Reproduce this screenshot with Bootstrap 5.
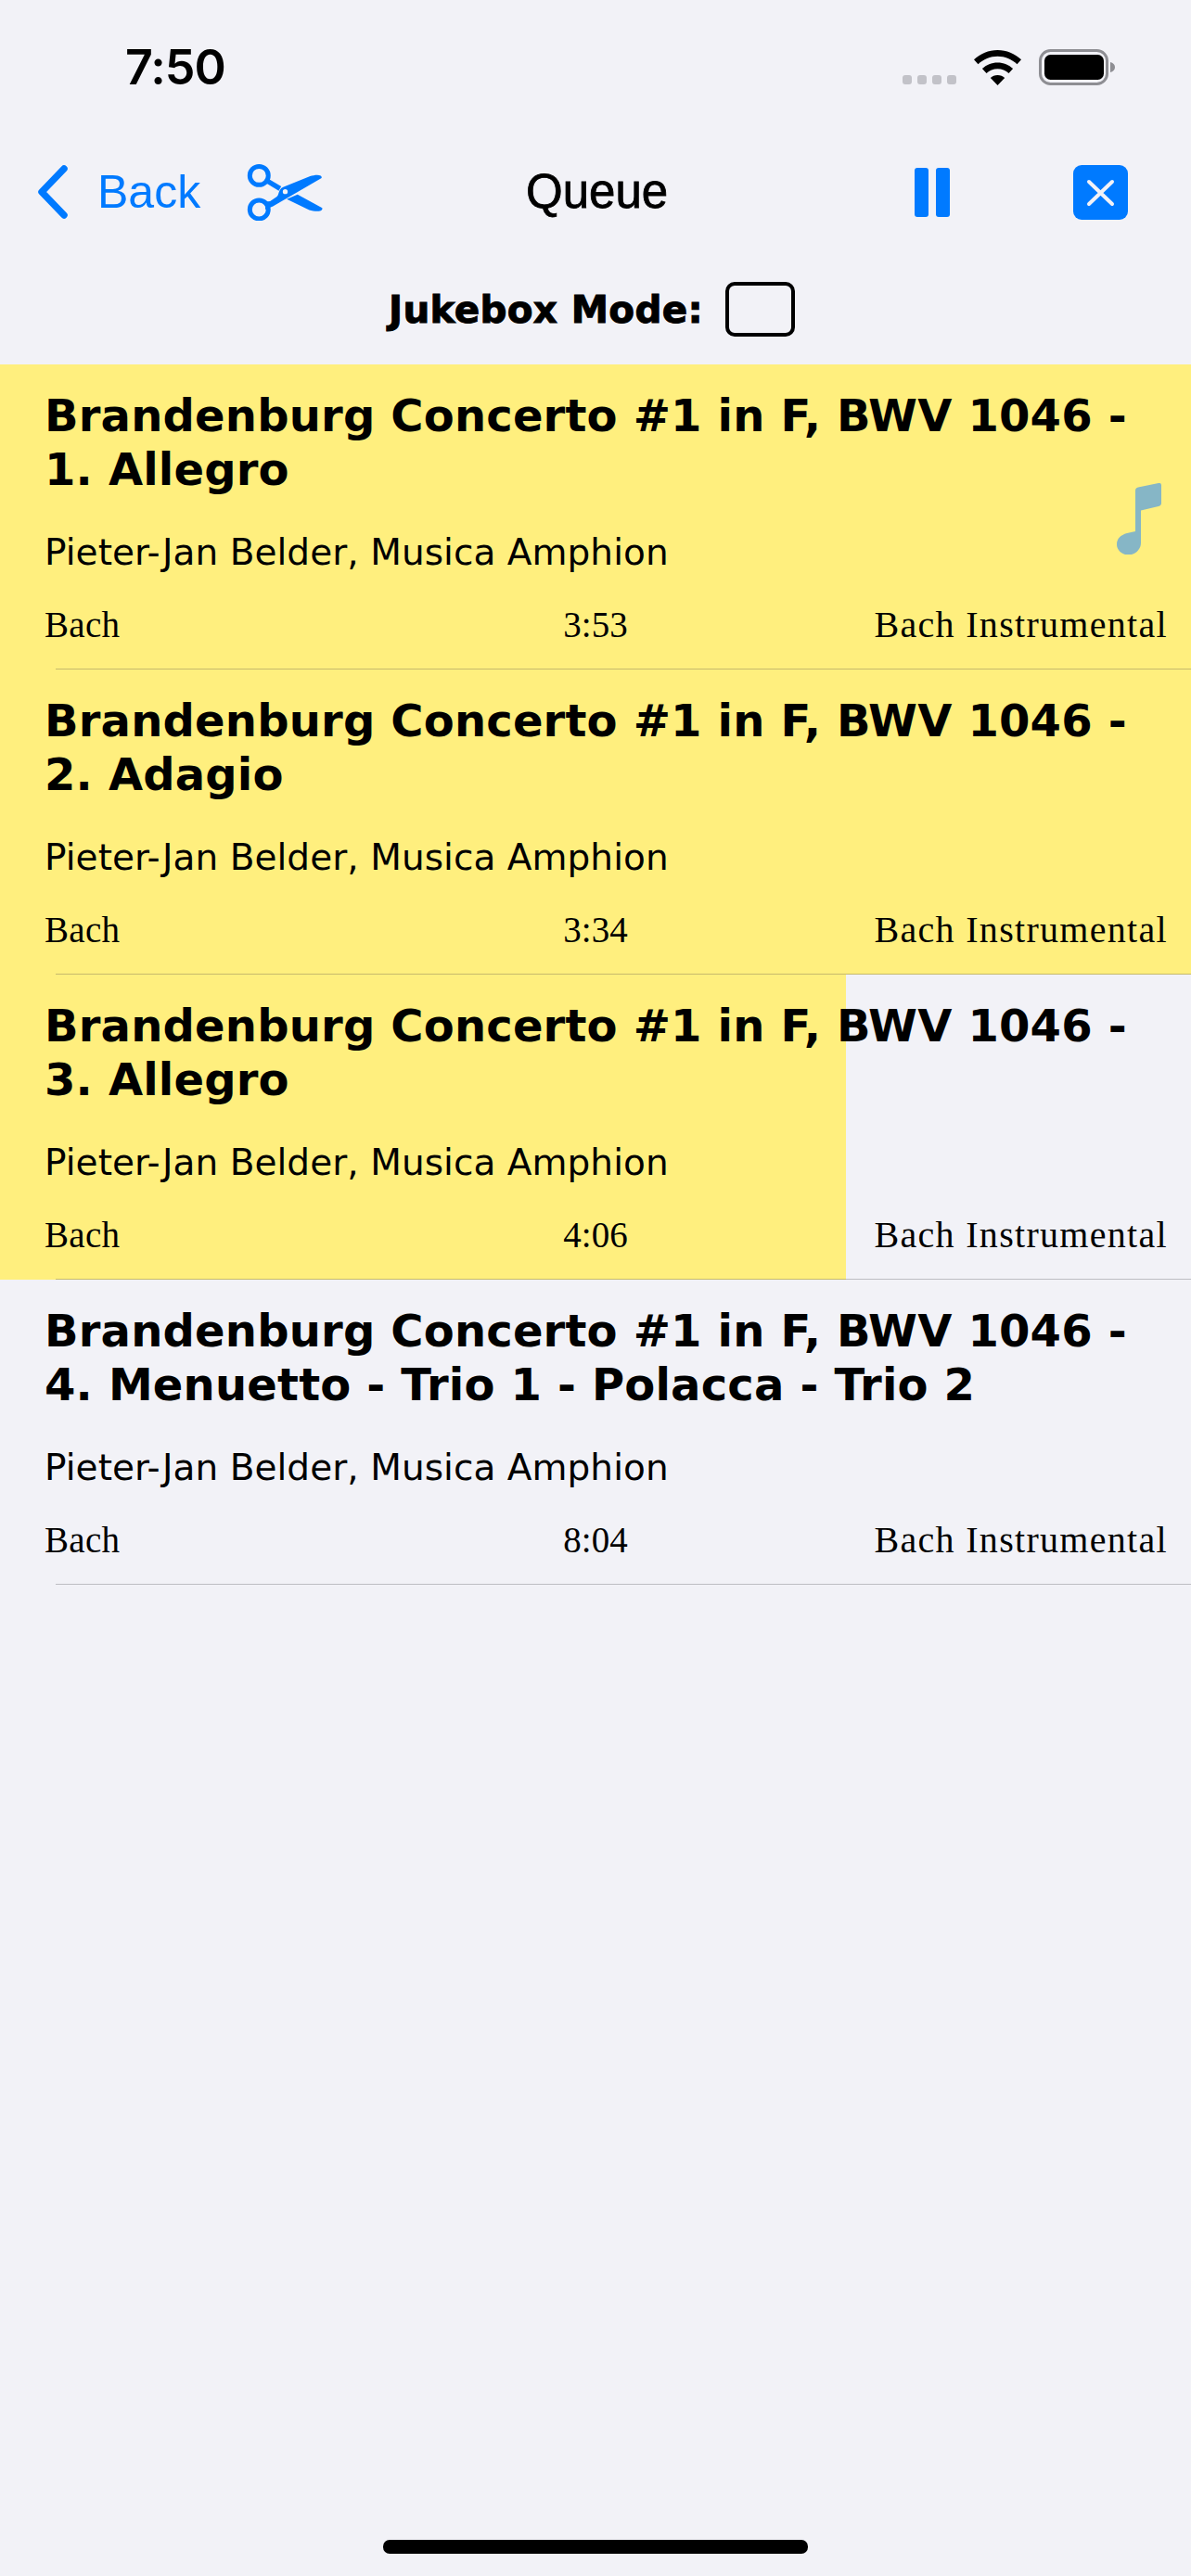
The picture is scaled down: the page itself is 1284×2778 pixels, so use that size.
<!DOCTYPE html>
<html lang="en">
  <head>
    <meta charset="UTF-8" />
    <title>Queue</title>
    <link
      href="https://cdn.jsdelivr.net/npm/bootstrap@5.3.2/dist/css/bootstrap.min.css"
      rel="stylesheet"
    />
    <style>
      body {
        background-color: #f2f2f7;
        color: #000;
        min-height: 2778px;
        font-family: "DejaVu Sans", sans-serif;
      }

      .status-strip {
        height: 150px;
        padding: 50px 82px 0 135px;
      }

      .clock {
        font-family: "Inter", sans-serif;
        font-weight: 600;
        font-size: 52px;
        line-height: 46px;
        letter-spacing: -1px;
      }

      .signal-dot {
        width: 10px;
        height: 10px;
        border-radius: 3px;
        background-color: #c2c2c8;
      }

      .signal-dots {
        gap: 6px;
        margin-top: 31px;
        margin-right: 19px;
      }

      .wifi-mark {
        margin-top: 4px;
        margin-right: 19px;
      }

      .battery-mark {
        margin-top: 3px;
      }

      .top-bar {
        height: 114px;
        padding: 0 68px 0 41px;
      }

      .top-left {
        width: 526px;
      }

      .back-label {
        font-family: "Liberation Sans", sans-serif;
        font-size: 50px;
        line-height: 60px;
        color: #007aff;
        margin-left: 32px;
        margin-right: 50px;
      }

      .bar-title {
        font-family: "Liberation Sans", sans-serif;
        font-size: 51px;
        line-height: 60px;
        -webkit-text-stroke: 0.8px #000;
      }

      .pause-btn {
        margin-right: 133px;
      }

      .mode-strip {
        height: 129px;
        padding: 10px 8px 0 0;
      }

      .mode-label {
        font-weight: 700;
        font-size: 40.5px;
        line-height: 48px;
        letter-spacing: 0.3px;
        margin-right: 24px;
        -webkit-text-stroke: 1px #000;
      }

      .mode-check.form-check-input {
        width: 75px;
        height: 59px;
        margin: 0;
        background-color: transparent;
        border: 4px solid #000;
        border-radius: 10px;
      }

      .queue-item {
        height: 329px;
        padding-top: 26px;
      }

      .queue-item::after {
        content: "";
        position: absolute;
        left: 60px;
        right: 0;
        bottom: 0;
        height: 1px;
        background-color: rgba(60, 60, 67, 0.29);
      }

      .item-fill {
        top: 0;
        bottom: 0;
        left: 0;
        background-color: #ffef7e;
      }

      .item-title {
        font-size: 48px;
        font-weight: 700;
        line-height: 58px;
        letter-spacing: 0.18px;
        margin: 0 48px 38px;
      }

      .item-artist {
        font-size: 39px;
        line-height: 46px;
        letter-spacing: 0.05px;
        margin: 0 48px 33px;
      }

      .item-meta {
        font-family: "Liberation Serif", serif;
        font-size: 39px;
        line-height: 44px;
      }

      .meta-left {
        padding-left: 48px;
        letter-spacing: 0.3px;
      }

      .meta-right {
        padding-right: 25px;
        font-size: 40px;
        letter-spacing: 1.3px;
      }

      .note-mark {
        top: 128px;
        right: 32px;
      }

      .home-pill {
        width: 458px;
        height: 15px;
        border-radius: 7px;
        background-color: #000;
        margin-bottom: 24px;
      }
    </style>
  </head>
  <body class="d-flex flex-column">
    <div class="status-strip d-flex justify-content-between align-items-start">
      <div class="clock">7:50</div>
      <div class="d-flex align-items-start">
        <div class="signal-dots d-flex">
          <span class="signal-dot"></span>
          <span class="signal-dot"></span>
          <span class="signal-dot"></span>
          <span class="signal-dot"></span>
        </div>
        <svg width="51" height="38" viewBox="0 0 51 38" class="wifi-mark">
          <path d="M25.5 0C15.8 0 7 3.800 0 10.300l4.500 5C10.200 10 17.500 6.800 25.500 6.800S40.800 10 46.500 15.300l4.500-5C44 3.800 35.200 0 25.500 0z" fill="#000" />
          <path d="M25.500 13.400c-6.400 0-12.200 2.500-16.600 6.600l4.600 5c3.200-3 7.400-4.800 12-4.800s8.800 1.800 12 4.800l4.600-5c-4.400-4.100-10.200-6.600-16.600-6.600z" fill="#000" />
          <path d="M25.500 27c-3 0-5.700 1.100-7.700 3l7.700 8 7.700-8c-2-1.900-4.700-3-7.700-3z" fill="#000" />
        </svg>
        <svg width="82" height="39" viewBox="0 0 82 39" class="battery-mark">
          <rect x="1.500" y="1.500" width="72" height="36" rx="11" fill="none" stroke="#8e8e93" stroke-width="3" />
          <rect x="6" y="6" width="64" height="27" rx="6.500" fill="#000" />
          <path d="M77 14c3 .6 5 2.800 5 5.500S80 24.400 77 25z" fill="#8e8e93" />
        </svg>
      </div>
    </div>

    <nav class="top-bar d-flex align-items-center">
      <div class="top-left d-flex align-items-center">
        <svg width="32" height="58" viewBox="0 0 32 58">
          <path d="M28 4 4 29l24 25" fill="none" stroke="#007aff" stroke-width="7.500" stroke-linecap="round" stroke-linejoin="round" />
        </svg>
        <span class="back-label">Back</span>
        <svg width="83" height="62" viewBox="30 27 250 186">
          <circle cx="70" cy="67" r="30" fill="none" stroke="#007aff" stroke-width="15" />
          <circle cx="70" cy="177" r="30" fill="none" stroke="#007aff" stroke-width="15" />
          <path d="M96 84l42 25" fill="none" stroke="#007aff" stroke-width="16" />
          <path d="M92 152l14-2 22-15c5-4 5-12 9-20 3-6 8-9 15-12l84-34c11-4 27-6 34-2 3 2 4 5 3 8l-158 92-25 10z" fill="#007aff" />
          <path d="M160 143l35-15 80 44c2 3-1 8-7 10-10 2-24 0-35-3z" fill="#007aff" />
          <circle cx="155" cy="119" r="8" fill="#f2f2f7" />
        </svg>
      </div>
      <div class="bar-title">Queue</div>
      <div class="d-flex align-items-center ms-auto">
        <svg width="38" height="53" viewBox="0 0 38 53" class="pause-btn">
          <rect width="15" height="53" rx="3" fill="#007aff" />
          <rect x="23" width="15" height="53" rx="3" fill="#007aff" />
        </svg>
        <svg width="59" height="59" viewBox="0 0 59 59">
          <rect width="59" height="59" rx="9" fill="#007aff" />
          <path d="M17 18l25 24M42 18 17 42" stroke="#f2f2f7" stroke-width="4" stroke-linecap="round" />
        </svg>
      </div>
    </nav>

    <div class="mode-strip d-flex align-items-center justify-content-center">
      <label class="mode-label" for="jukebox">Jukebox Mode:</label>
      <input class="form-check-input mode-check" type="checkbox" id="jukebox" />
    </div>

    <div class="list-group list-group-flush">
      <div class="queue-item position-relative">
        <div class="item-fill position-absolute" style="width: 100%"></div>
        <div class="position-relative">
          <h2 class="item-title">Brandenburg Concerto #1 in F, BWV 1046 - 1. Allegro</h2>
          <div class="item-artist">Pieter-Jan Belder, Musica Amphion</div>
          <div class="item-meta row g-0 align-items-baseline">
            <div class="col-4 meta-left">Bach</div>
            <div class="col-4 text-center">3:53</div>
            <div class="col-4 text-end meta-right">Bach Instrumental</div>
          </div>
        </div>
        <svg class="note-mark position-absolute" width="48" height="77" viewBox="0 0 48 77">
          <path d="M20 8c0-2 1-3 3-3.500L45 0c2-.3 3 .5 3 2.500v19c0 2-1 3-3 3.500l-19 4.500v35c0 7-6 13-14 13C5 77 0 72 0 66c0-6 4-10 11-12l9-2z" fill="#86b6c6" />
        </svg>
      </div>
      <div class="queue-item position-relative">
        <div class="item-fill position-absolute" style="width: 100%"></div>
        <div class="position-relative">
          <h2 class="item-title">Brandenburg Concerto #1 in F, BWV 1046 - 2. Adagio</h2>
          <div class="item-artist">Pieter-Jan Belder, Musica Amphion</div>
          <div class="item-meta row g-0 align-items-baseline">
            <div class="col-4 meta-left">Bach</div>
            <div class="col-4 text-center">3:34</div>
            <div class="col-4 text-end meta-right">Bach Instrumental</div>
          </div>
        </div>
      </div>
      <div class="queue-item position-relative">
        <div class="item-fill position-absolute" style="width: 71.03%"></div>
        <div class="position-relative">
          <h2 class="item-title">Brandenburg Concerto #1 in F, BWV 1046 - 3. Allegro</h2>
          <div class="item-artist">Pieter-Jan Belder, Musica Amphion</div>
          <div class="item-meta row g-0 align-items-baseline">
            <div class="col-4 meta-left">Bach</div>
            <div class="col-4 text-center">4:06</div>
            <div class="col-4 text-end meta-right">Bach Instrumental</div>
          </div>
        </div>
      </div>
      <div class="queue-item position-relative">
        <div class="position-relative">
          <h2 class="item-title">Brandenburg Concerto #1 in F, BWV 1046 - 4. Menuetto - Trio 1 - Polacca - Trio 2</h2>
          <div class="item-artist">Pieter-Jan Belder, Musica Amphion</div>
          <div class="item-meta row g-0 align-items-baseline">
            <div class="col-4 meta-left">Bach</div>
            <div class="col-4 text-center">8:04</div>
            <div class="col-4 text-end meta-right">Bach Instrumental</div>
          </div>
        </div>
      </div>
    </div>

    <div class="home-pill mt-auto mx-auto"></div>

    <script src="https://cdn.jsdelivr.net/npm/bootstrap@5.3.2/dist/js/bootstrap.bundle.min.js"></script>
  </body>
</html>
